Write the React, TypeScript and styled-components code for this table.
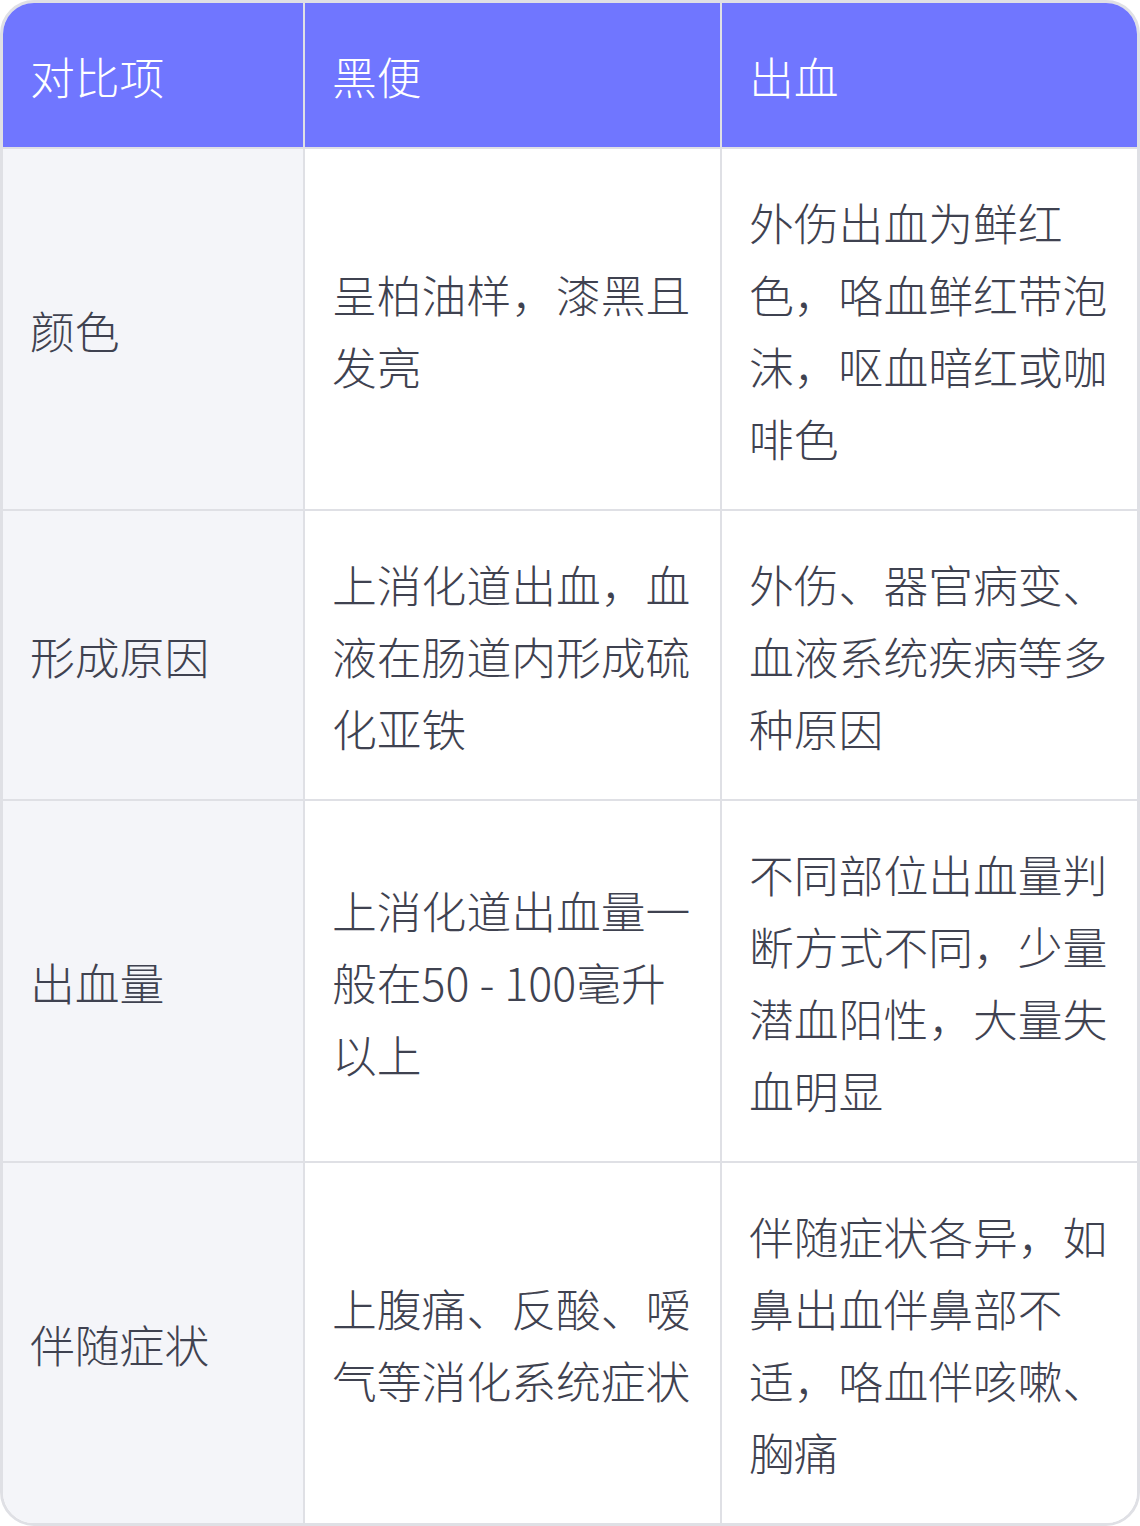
import React from "react";
import styled, { createGlobalStyle } from "styled-components";

const Global = createGlobalStyle`
  html, body { margin: 0; padding: 0; background: #ffffff; }
  body { font-family: "Noto Sans CJK SC", "Noto Sans", sans-serif; }
`;

const Frame = styled.div`
  width: 1140px;
  box-sizing: border-box;
  border: 3px solid #dfe0e5;
  border-radius: 34px;
  overflow: hidden;
  background: #ffffff;
`;

const Grid = styled.div`
  display: grid;
  grid-template-columns: 302px 417px 415px;
`;

const Cell = styled.div<{ $head?: boolean; $first?: boolean; $last?: boolean; $bottom?: boolean }>`
  box-sizing: border-box;
  display: flex;
  align-items: center;
  padding: 37px 29px 35px 27px;
  font-family: "Noto Sans CJK SC", "Noto Sans", sans-serif;
  font-weight: 300;
  font-size: 44.8px;
  line-height: 72px;
  color: ${(p) => (p.$head ? "#ffffff" : "#3f4250")};
  background: ${(p) => (p.$head ? "#7076ff" : p.$first ? "#f4f5f9" : "#ffffff")};
  border-right: ${(p) => (p.$last ? "none" : "2px solid #dfe0e5")};
  border-bottom: ${(p) => (p.$bottom ? "none" : "2px solid #dfe0e5")};
  word-break: break-all;
`;

const headers = ["对比项", "黑便", "出血"];

const rows: string[][] = [
  ["颜色", "呈柏油样，漆黑且发亮", "外伤出血为鲜红色，咯血鲜红带泡沫，呕血暗红或咖啡色"],
  ["形成原因", "上消化道出血，血液在肠道内形成硫化亚铁", "外伤、器官病变、血液系统疾病等多种原因"],
  ["出血量", "上消化道出血量一般在50 - 100毫升以上", "不同部位出血量判断方式不同，少量潜血阳性，大量失血明显"],
  ["伴随症状", "上腹痛、反酸、嗳气等消化系统症状", "伴随症状各异，如鼻出血伴鼻部不适，咯血伴咳嗽、胸痛"],
];

export default function App() {
  return (
    <>
      <Global />
      <Frame>
        <Grid>
          {headers.map((h, i) => (
            <Cell key={h} $head $last={i === 2}>
              {h}
            </Cell>
          ))}
          {rows.map((r, ri) =>
            r.map((c, ci) => (
              <Cell
                key={`${ri}-${ci}`}
                $first={ci === 0}
                $last={ci === 2}
                $bottom={ri === rows.length - 1}
              >
                {c}
              </Cell>
            ))
          )}
        </Grid>
      </Frame>
    </>
  );
}
